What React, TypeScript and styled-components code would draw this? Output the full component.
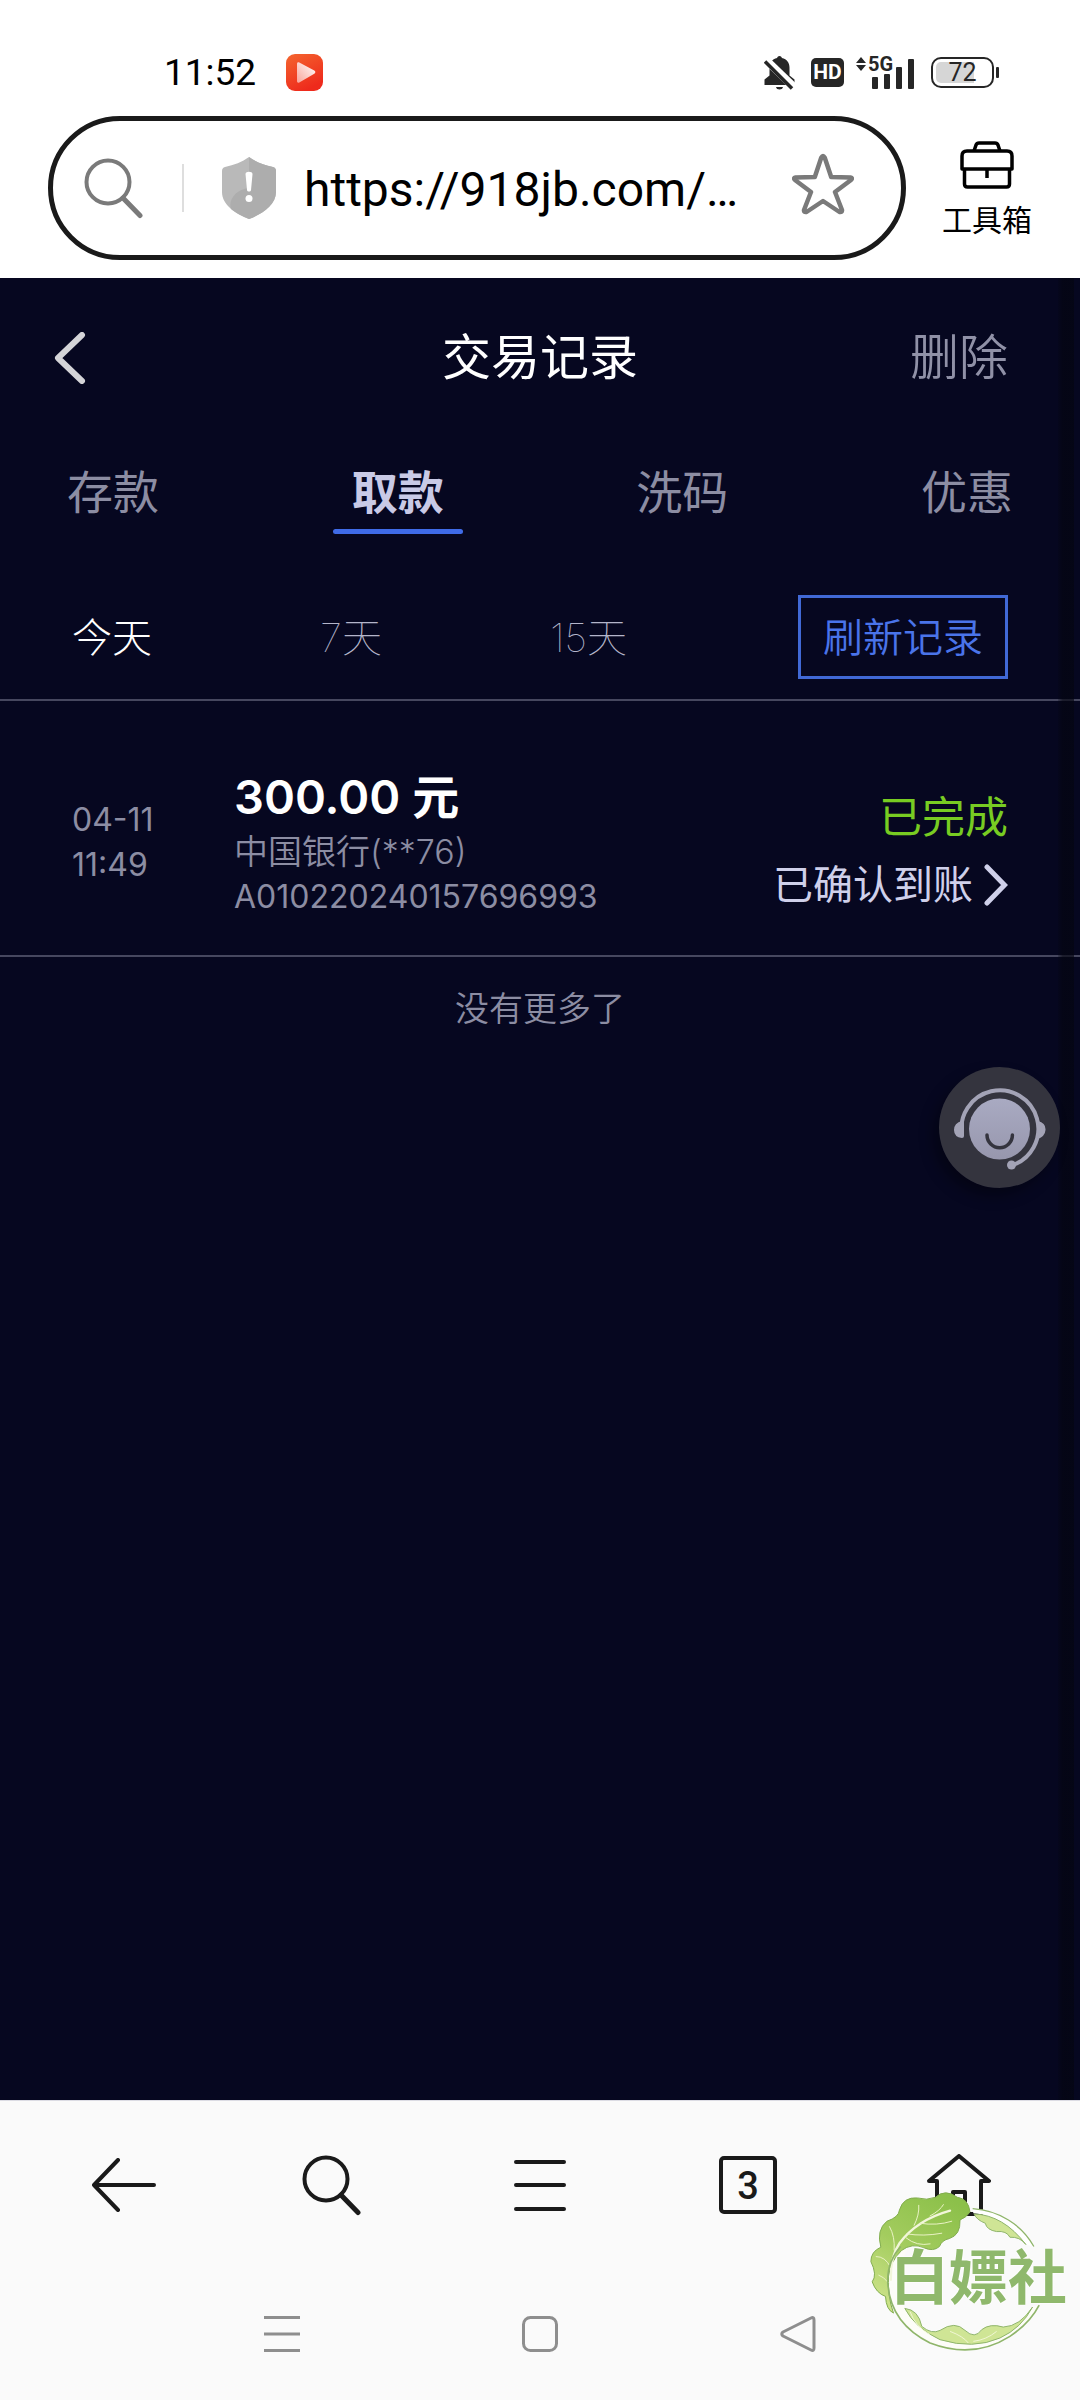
import React, { useState } from "react";
import styled, { createGlobalStyle } from "styled-components";

const ui = `Roboto, "Noto Sans CJK SC", sans-serif`;
const brand = `Inter, "Noto Sans CJK SC", sans-serif`;

const GlobalStyle = createGlobalStyle`
  * { box-sizing: border-box; }
  body { margin: 0; background: #fafafa; }
  button, input { font: inherit; color: inherit; border: 0; background: none; padding: 0; margin: 0; outline: 0; }
  button { cursor: pointer; white-space: nowrap; }
  svg { display: block; flex: none; }
`;

const Screen = styled.div`
  position: relative;
  display: flex;
  flex-direction: column;
  min-height: 100vh;
  font-family: ${brand};
`;

/* ---------- system status bar ---------- */
const TopArea = styled.header`
  background: #fff;
  padding-bottom: 18px;
`;
const StatusBar = styled.div`
  display: flex;
  align-items: center;
  height: 116px;
  padding: 28px 82px 0 164px;
  font-family: ${ui};
  color: #000;
`;
const Clock = styled.time`
  padding-top: 2px;
  font-size: 37px;
  line-height: 44px;
  margin-right: 30px;
`;
const StatusIcons = styled.div`
  display: flex;
  align-items: center;
  margin-left: auto;
`;
const HdBadge = styled.span`
  margin: 0 12px 0 16px;
  width: 33px;
  border-radius: 5px;
  background: #262626;
  color: #fff;
  font-size: 21px;
  font-weight: 700;
  line-height: 29px;
  text-align: center;
`;
const Signal = styled.div`
  position: relative;
  margin-right: 15px;
`;
const Network = styled.span`
  position: absolute;
  left: 12px;
  top: 0;
  font-size: 20px;
  font-weight: 700;
  line-height: 16px;
  color: #262626;
`;
const Battery = styled.div`
  position: relative;
  width: 63px;
  height: 31px;
  border: 2px solid #262626;
  border-radius: 10px;
  margin-right: 4px;
  padding: 3px;
  &::after {
    content: "";
    position: absolute;
    right: -7px;
    top: 8px;
    width: 3px;
    height: 11px;
    background: #262626;
    border-radius: 1px;
  }
`;
const BatteryFill = styled.div`
  height: 100%;
  background: #d6d6d6;
  border-radius: 5px 0 0 5px;
`;
const BatteryText = styled.span`
  position: absolute;
  inset: 0;
  font-size: 25px;
  line-height: 28px;
  text-align: center;
  color: #262626;
`;

/* ---------- address bar ---------- */
const AddressRow = styled.div`
  display: flex;
  align-items: center;
  padding: 0 12px 0 48px;
`;
const AddressBar = styled.div`
  flex: 1;
  min-width: 0;
  display: flex;
  align-items: center;
  gap: 28px;
  height: 144px;
  padding: 0 47px 0 31px;
  border: 5px solid #1a1a1a;
  border-radius: 72px;
`;
const AddressLead = styled.div`
  display: flex;
  align-items: center;
  gap: 38px;
`;
const Divider = styled.span`
  width: 2px;
  height: 48px;
  background: #dedede;
`;
const AddressInput = styled.input`
  flex: 1;
  min-width: 0;
  padding-top: 3px;
  font-family: ${ui};
  font-size: 48px;
  line-height: 64px;
  color: #000;
`;
const Toolbox = styled.button`
  display: flex;
  flex-direction: column;
  align-items: center;
  gap: 14px;
  width: 162px;
  padding-top: 4px;
  font-family: ${ui};
  font-size: 30px;
  line-height: 36px;
  font-weight: 400;
  color: #000;
`;

/* ---------- page ---------- */
const Page = styled.main`
  position: relative;
  flex: 1;
  background: #060720;
  &::after {
    content: "";
    position: absolute;
    top: 0;
    bottom: 0;
    right: 6px;
    width: 16px;
    background: linear-gradient(to right, rgba(4, 5, 16, 0.2), rgba(4, 5, 16, 0.65) 30%);
    pointer-events: none;
  }
`;
const TitleBar = styled.div`
  display: grid;
  grid-template-columns: 1fr auto 1fr;
  align-items: center;
  height: 158px;
  padding: 2px 72px 0 54px;
`;
const Title = styled.h1`
  margin: 0;
  padding-left: 18px;
  font-size: 49px;
  line-height: 64px;
  font-weight: 400;
  color: #fff;
`;
const BackButton = styled.button`
  justify-self: start;
`;
const DeleteButton = styled.button`
  justify-self: end;
  font-size: 49px;
  line-height: 64px;
  font-weight: 350;
  color: #9091a7;
`;
const Tabs = styled.nav`
  display: flex;
  justify-content: space-between;
  padding: 0 48px;
`;
const Tab = styled.button<{ $on: boolean }>`
  width: 130px;
  padding-top: 26px;
  font-size: 46px;
  line-height: 60px;
  font-weight: ${(p) => (p.$on ? 700 : 400)};
  color: ${(p) => (p.$on ? "#c9cae6" : "#8c8da3")};
  &::after {
    content: "";
    display: block;
    height: 5px;
    margin-top: 7px;
    border-radius: 3px;
    background: ${(p) => (p.$on ? "#3f6be8" : "transparent")};
  }
`;
const Filters = styled.div`
  display: flex;
  align-items: center;
  justify-content: space-between;
  padding: 61px 72px 20px;
  border-bottom: 2px solid #46475f;
`;
const Ranges = styled.div`
  display: flex;
  gap: 168px;
  padding-top: 2px;
`;
const Filter = styled.button<{ $on: boolean }>`
  font-size: 40px;
  line-height: 60px;
  font-weight: ${(p) => (p.$on ? 300 : 100)};
  color: ${(p) => (p.$on ? "#fff" : "#b4b5ca")};
`;
const Refresh = styled.button`
  padding: 10px 22px 8px;
  border: 3px solid #4169d6;
  font-size: 40px;
  line-height: 60px;
  font-weight: 350;
  color: #4a74ea;
`;
const Record = styled.article`
  display: grid;
  grid-template-columns: 162px 1fr auto;
  align-items: end;
  padding: 64px 72px 36px;
  border-bottom: 2px solid #46475f;
  font-size: 32px;
  line-height: 45px;
  font-weight: 400;
  color: #8c8da3;
`;
const When = styled.time`
  align-self: center;
  display: flex;
  flex-direction: column;
`;
const Details = styled.div`
  display: flex;
  flex-direction: column;
`;
const Amount = styled.strong`
  font-size: 47px;
  line-height: 64px;
  font-weight: 600;
  color: #fff;
`;
const Bank = styled.span`
  font-size: 34px;
  font-weight: 350;
`;
const State = styled.div`
  display: flex;
  flex-direction: column;
  align-items: flex-end;
  line-height: 68px;
`;
const Done = styled.span`
  font-size: 43px;
  color: #78cc22;
`;
const Confirm = styled.a`
  display: flex;
  align-items: center;
  gap: 11px;
  font-size: 40px;
  color: #cfd0ea;
  text-decoration: none;
`;
const EndNote = styled.p`
  margin: 0;
  text-align: center;
  font-size: 34px;
  line-height: 104px;
  font-weight: 350;
  color: #8c8da3;
`;
const Service = styled.button`
  position: absolute;
  z-index: 1;
  top: 789px;
  right: 20px;
  border-radius: 50%;
  box-shadow: -6px 8px 14px rgba(0, 0, 0, 0.35);
`;

/* ---------- bottom bars ---------- */
const BottomArea = styled.footer`
  background: #fafafa;
  border-top: 1px solid #dcdce4;
`;
const Toolbar = styled.nav`
  display: flex;
  height: 168px;
  padding: 0 20px;
`;
const BarButton = styled.button`
  flex: 1;
  display: flex;
  align-items: center;
  justify-content: center;
  color: #1a1a1a;
`;
const TabCount = styled.span`
  width: 58px;
  height: 58px;
  border: 4px solid #1a1a1a;
  border-radius: 5px;
  font-family: ${ui};
  font-size: 38px;
  font-weight: 500;
  line-height: 52px;
  text-align: center;
`;
const SystemNav = styled.nav`
  display: flex;
  height: 131px;
  padding: 0 153px 2px;
`;
const Stamp = styled.div`
  position: absolute;
  right: 10px;
  bottom: 47px;
`;
const StampText = styled.span`
  position: absolute;
  left: 20px;
  top: 57px;
  white-space: nowrap;
  font-size: 59px;
  line-height: 62px;
  font-weight: 700;
  color: #8fb86c;
  text-shadow: 0 0 3px #fff, 0 0 3px #fff;
`;

const BellOff = () => (
  <svg width="31" height="35" viewBox="0 0 31 35" aria-label="静音">
    <path d="M15.500 1c1.500 0 2.200 1 2.400 2C23 4 25.500 8 25.500 12.500v8l5 4V30H.5v-5.500l5-4v-8C5.500 8 8 4 13.100 3c.2-1 .9-2 2.400-2zM12 32h7c-.5 1.800-1.800 2.500-3.500 2.500S12.500 33.800 12 32z" fill="#262626" />
    <path d="M0 3l31 30" stroke="#fff" strokeWidth="8" />
    <path d="M1 6.500l27 27" stroke="#262626" strokeWidth="3.500" />
  </svg>
);
const SignalBars = () => (
  <svg width="60" height="33" viewBox="0 0 60 33" fill="#262626">
    <path d="M0 7l5-6 5 6zM0 9h10l-5 6z" />
    <rect x="16" y="21" width="6" height="12" rx="1" />
    <rect x="28" y="18" width="6" height="15" rx="1" />
    <rect x="40" y="11" width="6" height="22" rx="1" />
    <rect x="52" y="3" width="6" height="30" rx="1" />
  </svg>
);
const PlayApp = () => (
  <svg width="37" height="37" viewBox="0 0 37 37">
    <defs>
      <linearGradient id="play" x1="0" y1="0" x2="0.500" y2="1">
        <stop offset="0" stopColor="#f4662f" />
        <stop offset="1" stopColor="#ee2a1c" />
      </linearGradient>
      <linearGradient id="tri" x1="1" y1="0" x2="0" y2="1">
        <stop offset="0" stopColor="#fff" />
        <stop offset="1" stopColor="#f9a59a" />
      </linearGradient>
    </defs>
    <rect width="37" height="37" rx="9" fill="url(#play)" />
    <path d="M11 10c0-1.500 1-2 2.300-1.400l15 8c1.400.8 1.400 2.400 0 3.200l-15 8.600C12 29 11 28.500 11 27z" fill="url(#tri)" />
  </svg>
);
const Magnifier = ({ color, width }: { color: string; width: number }) => (
  <svg width="60" height="62" viewBox="0 0 60 62" fill="none" stroke={color} strokeWidth={width} strokeLinecap="round">
    <circle cx="24" cy="25" r="21.500" />
    <path d="M39 41l17 17.500" strokeWidth={width + 1} />
  </svg>
);
const Shield = () => (
  <svg width="54" height="62" viewBox="0 0 54 62">
    <path d="M27 0c7 5 15 8 24 10 2 .5 3 2 3 4v21c0 13-14 22-27 27C14 57 0 48 0 35V14c0-2 1-3.500 3-4C12 8 20 5 27 0z" fill="#b9b9b9" />
    <path d="M27 0c7 5 15 8 24 10 2 .5 3 2 3 4v21c0 13-14 22-27 27-7-3-13-6-18-10-3-9 5-20 18-21z" fill="#adadad" />
    <path d="M23.500 17c0-3 7-3 7 0l-1.500 16c-.2 2-3.800 2-4 0z" fill="#fff" />
    <circle cx="27" cy="41.500" r="3.500" fill="#fff" />
  </svg>
);
const Star = () => (
  <svg width="62" height="70" viewBox="0 0 62 70" fill="none" stroke="#7a7a7a" strokeWidth="4.500" strokeLinejoin="round">
    <path d="M29.300 4.500q1.700-3 3.400 0l6.500 19.500 19.300.5q2.500.5.5 2.500L43 39l7 18q.3 2.500-2.500 2L31 48 14.500 59q-2.800.5-2.500-2l7-18L3 27q-2-2 .5-2.500l19.300-.5z" />
  </svg>
);
const ToolboxIcon = () => (
  <svg width="54" height="48" viewBox="0 0 54 48" fill="none" stroke="#000" strokeWidth="3.500">
    <path d="M14 10l2-6q.8-2 3-2h16q2.200 0 3 2l2 6" />
    <path d="M2 28V15q0-5 5-5h40q5 0 5 5v13z" strokeLinejoin="round" />
    <path d="M4.500 28v15q0 3 3 3h39q3 0 3-3V28M27 28v9" />
  </svg>
);
const Headset = () => (
  <svg width="121" height="121" viewBox="0 0 121 121">
    <defs>
      <linearGradient id="face" x1="0" y1="0" x2="0" y2="1">
        <stop offset="0" stopColor="#a9aac2" />
        <stop offset="1" stopColor="#9797ad" />
      </linearGradient>
    </defs>
    <circle cx="60.500" cy="60.500" r="60.500" fill="#34343e" />
    <circle cx="60.500" cy="62" r="30.500" fill="url(#face)" />
    <path d="M23 69a38.500 38.500 0 1 1 49.500 29.500" fill="none" stroke="#a3a3b6" strokeWidth="4" />
    <path d="M23 54q-8 2-8 9t8 8q2 0 2-2V54zM99 54q8 2 7.500 9t-8.500 9z" fill="#a3a3b6" />
    <circle cx="72.500" cy="98" r="4.500" fill="#a3a3b6" />
    <path d="M48 68a12.700 12.700 0 0 0 25.400 0" fill="none" stroke="#34343e" strokeWidth="3.500" strokeLinecap="round" />
  </svg>
);
const Chevron = ({ left }: { left?: boolean }) =>
  left ? (
    <svg width="32" height="52" viewBox="0 0 32 52" fill="none" stroke="#d4d4d8" strokeWidth="6" strokeLinecap="round" strokeLinejoin="round">
      <path d="M28 3L4 26l24 23" />
    </svg>
  ) : (
    <svg width="24" height="42" viewBox="0 0 24 42" fill="none" stroke="#cfd0ea" strokeWidth="5" strokeLinecap="round" strokeLinejoin="miter">
      <path d="M3 3l17.500 18L3 39" />
    </svg>
  );
const Line = { fill: "none", stroke: "#1a1a1a", strokeWidth: 4, strokeLinecap: "round", strokeLinejoin: "round" } as const;
const Thin = { fill: "none", stroke: "#8e8e8e", strokeWidth: 3, strokeLinejoin: "round" } as const;

const Cabbage = () => (
  <svg width="200" height="163" viewBox="90 330 600 490">
    <defs>
      <linearGradient id="leaf" x1="0.700" y1="0" x2="0.200" y2="1">
        <stop offset="0" stopColor="#8cc04a" />
        <stop offset="0.500" stopColor="#a3cc5e" />
        <stop offset="1" stopColor="#cfe48c" />
      </linearGradient>
    </defs>
    <path d="M398 386A215 215 0 0 1 580 500L558 494A200 200 0 0 0 400 400z" fill="#fff" />
    <path d="M182 500Q140 545 143 610Q150 730 270 790Q400 840 510 770Q570 730 598 676L578 682Q545 745 480 775Q400 810 300 780Q225 745 194 686Q160 600 200 510z" fill="#fdfdf8" />
    <path
      d="M160 700Q138 690 136 650Q108 640 96 606Q112 585 92 545Q92 515 122 502Q108 450 140 424Q176 412 178 390Q190 350 232 354Q260 362 286 352Q315 325 352 352Q385 356 390 396Q380 412 360 420Q362 465 328 476Q306 480 298 500Q280 516 252 504Q215 488 184 512Q150 545 145 590Q142 650 160 700z"
      fill="url(#leaf)"
      stroke="#82ad4e"
      strokeWidth="3"
    />
    <path d="M330 392Q230 420 178 490Q150 530 152 600" fill="none" stroke="#f2f6da" strokeWidth="7" strokeLinecap="round" />
    <path d="M222 436Q238 405 236 376M270 408Q300 392 310 374M200 462Q250 470 305 460M240 430Q290 438 335 424M162 510Q165 470 148 440M150 560Q135 530 108 530M146 610Q130 590 116 586M198 474Q230 500 270 492" fill="none" stroke="#e9f2c4" strokeWidth="3" strokeLinecap="round" />
    <path d="M398 386A225 215 0 0 1 582 500" fill="none" stroke="#8fb56a" strokeWidth="4" />
    <path d="M402 402Q490 405 558 494Q540 470 510 472Q500 452 470 455Q440 450 436 430Q410 420 402 402z" fill="#cfe595" stroke="#8fb56a" strokeWidth="3" />
    <path d="M182 500Q140 545 143 610Q150 730 270 790Q400 840 510 770Q570 730 598 676" fill="none" stroke="#8fb56a" strokeWidth="5" />
    <path
      d="M194 686Q235 690 245 740Q275 765 300 752Q345 722 375 752Q405 780 425 750Q450 730 490 742Q540 740 578 682Q545 745 480 775Q400 810 300 780Q225 745 194 686z"
      fill="#cfe595"
      stroke="#8fb56a"
      strokeWidth="3"
    />
    <path d="M210 696Q225 740 270 765M330 755Q370 770 385 790M400 785Q440 780 470 755" fill="none" stroke="#f0f6d4" strokeWidth="3" />
  </svg>
);

const tabs = ["存款", "取款", "洗码", "优惠"];
const ranges = ["今天", "7天", "15天"];

export default function App() {
  const [tab, setTab] = useState("取款");
  const [range, setRange] = useState("今天");
  const level = 72;
  return (
    <Screen>
      <GlobalStyle />
      <TopArea>
        <StatusBar>
          <Clock>11:52</Clock>
          <PlayApp />
          <StatusIcons>
            <BellOff />
            <HdBadge>HD</HdBadge>
            <Signal>
              <SignalBars />
              <Network>5G</Network>
            </Signal>
            <Battery>
              <BatteryFill style={{ width: `${level}%` }} />
              <BatteryText>{level}</BatteryText>
            </Battery>
          </StatusIcons>
        </StatusBar>
        <AddressRow>
          <AddressBar>
            <AddressLead>
              <Magnifier color="#7a7a7a" width={4} />
              <Divider />
              <Shield />
            </AddressLead>
            <AddressInput aria-label="网址" defaultValue="https://918jb.com/…" />
            <button aria-label="收藏">
              <Star />
            </button>
          </AddressBar>
          <Toolbox>
            <ToolboxIcon />
            工具箱
          </Toolbox>
        </AddressRow>
      </TopArea>

      <Page>
        <TitleBar>
          <BackButton aria-label="返回">
            <Chevron left />
          </BackButton>
          <Title>交易记录</Title>
          <DeleteButton>删除</DeleteButton>
        </TitleBar>
        <Tabs>
          {tabs.map((name) => (
            <Tab key={name} $on={name === tab} onClick={() => setTab(name)}>
              {name}
            </Tab>
          ))}
        </Tabs>
        <Filters>
          <Ranges>
            {ranges.map((name) => (
              <Filter key={name} $on={name === range} onClick={() => setRange(name)}>
                {name}
              </Filter>
            ))}
          </Ranges>
          <Refresh>刷新记录</Refresh>
        </Filters>
        <Record>
          <When>
            <span>04-11</span>
            <span>11:49</span>
          </When>
          <Details>
            <Amount>300.00 元</Amount>
            <Bank>中国银行(**76)</Bank>
            <span>A010220240157696993</span>
          </Details>
          <State>
            <Done>已完成</Done>
            <Confirm href="#confirm">
              已确认到账
              <Chevron />
            </Confirm>
          </State>
        </Record>
        <EndNote>没有更多了</EndNote>
        <Service aria-label="客服">
          <Headset />
        </Service>
      </Page>

      <BottomArea>
        <Toolbar>
          <BarButton aria-label="后退">
            <svg width="64" height="54" viewBox="0 0 64 54" {...Line}>
              <path d="M26 2L2 27l24 25M2 27h60" />
            </svg>
          </BarButton>
          <BarButton aria-label="搜索">
            <Magnifier color="#1a1a1a" width={4} />
          </BarButton>
          <BarButton aria-label="菜单">
            <svg width="52" height="52" viewBox="0 0 52 52" {...Line}>
              <path d="M2 3h48M2 26h48M2 50h48" />
            </svg>
          </BarButton>
          <BarButton aria-label="标签页">
            <TabCount>3</TabCount>
          </BarButton>
          <BarButton aria-label="主页">
            <svg width="70" height="62" viewBox="-6 0 70 62" {...Line}>
              <path d="M10 60V27H2L32 2l30 25h-8v33H38V38H26v22" />
            </svg>
          </BarButton>
        </Toolbar>
        <SystemNav>
          <BarButton aria-label="最近任务">
            <svg width="36" height="36" viewBox="0 0 36 36" {...Thin}>
              <path d="M0 1.500h36M0 18h36M0 34.500h36" />
            </svg>
          </BarButton>
          <BarButton aria-label="桌面">
            <svg width="36" height="36" viewBox="0 0 36 36" {...Thin}>
              <rect x="1.500" y="1.500" width="33" height="33" rx="7" />
            </svg>
          </BarButton>
          <BarButton aria-label="返回上一级">
            <svg width="36" height="36" viewBox="0 0 36 36" {...Thin}>
              <path d="M31 2q3-1.500 3 2v28q0 3.500-3 2L3 20q-2.500-2 0-4z" />
            </svg>
          </BarButton>
        </SystemNav>
      </BottomArea>
      <Stamp>
        <Cabbage />
        <StampText>白嫖社</StampText>
      </Stamp>
    </Screen>
  );
}
